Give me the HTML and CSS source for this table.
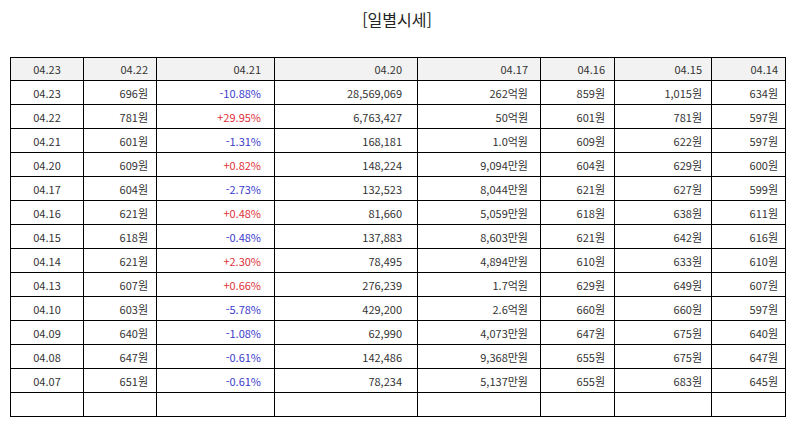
FILE: index.html
```html
<!DOCTYPE html>
<html lang="ko">
<head>
<meta charset="utf-8">
<link rel="stylesheet" href="styles.css">
</head>
<body>
<h1 class="title">[일별시세]</h1>
<table class="quotes">
<colgroup>
<col class="c1"><col class="c2"><col class="c3"><col class="c4"><col class="c5"><col class="c6"><col class="c7"><col class="c8">
</colgroup>
<thead>
<tr><th>04.23</th><th>04.22</th><th>04.21</th><th>04.20</th><th>04.17</th><th>04.16</th><th>04.15</th><th>04.14</th></tr>
</thead>
<tbody>
<tr><td>04.23</td><td>696원</td><td class="dn">-10.88%</td><td>28,569,069</td><td>262억원</td><td>859원</td><td>1,015원</td><td>634원</td></tr>
<tr><td>04.22</td><td>781원</td><td class="up">+29.95%</td><td>6,763,427</td><td>50억원</td><td>601원</td><td>781원</td><td>597원</td></tr>
<tr><td>04.21</td><td>601원</td><td class="dn">-1.31%</td><td>168,181</td><td>1.0억원</td><td>609원</td><td>622원</td><td>597원</td></tr>
<tr><td>04.20</td><td>609원</td><td class="up">+0.82%</td><td>148,224</td><td>9,094만원</td><td>604원</td><td>629원</td><td>600원</td></tr>
<tr><td>04.17</td><td>604원</td><td class="dn">-2.73%</td><td>132,523</td><td>8,044만원</td><td>621원</td><td>627원</td><td>599원</td></tr>
<tr><td>04.16</td><td>621원</td><td class="up">+0.48%</td><td>81,660</td><td>5,059만원</td><td>618원</td><td>638원</td><td>611원</td></tr>
<tr><td>04.15</td><td>618원</td><td class="dn">-0.48%</td><td>137,883</td><td>8,603만원</td><td>621원</td><td>642원</td><td>616원</td></tr>
<tr><td>04.14</td><td>621원</td><td class="up">+2.30%</td><td>78,495</td><td>4,894만원</td><td>610원</td><td>633원</td><td>610원</td></tr>
<tr><td>04.13</td><td>607원</td><td class="up">+0.66%</td><td>276,239</td><td>1.7억원</td><td>629원</td><td>649원</td><td>607원</td></tr>
<tr><td>04.10</td><td>603원</td><td class="dn">-5.78%</td><td>429,200</td><td>2.6억원</td><td>660원</td><td>660원</td><td>597원</td></tr>
<tr><td>04.09</td><td>640원</td><td class="dn">-1.08%</td><td>62,990</td><td>4,073만원</td><td>647원</td><td>675원</td><td>640원</td></tr>
<tr><td>04.08</td><td>647원</td><td class="dn">-0.61%</td><td>142,486</td><td>9,368만원</td><td>655원</td><td>675원</td><td>647원</td></tr>
<tr><td>04.07</td><td>651원</td><td class="dn">-0.61%</td><td>78,234</td><td>5,137만원</td><td>655원</td><td>683원</td><td>645원</td></tr>
<tr class="empty"><td></td><td></td><td></td><td></td><td></td><td></td><td></td><td></td></tr>
</tbody>
</table>
</body>
</html>
```
FILE: styles.css
```css
html, body {
  margin: 0;
  padding: 0;
  background: #ffffff;
}
body {
  font-family: "Noto Sans CJK KR", "Noto Sans", sans-serif;
  color: #333333;
  width: 794px;
}
.title {
  margin: 0;
  padding-top: 8px;
  height: 57px;
  box-sizing: border-box;
  text-align: center;
  font-size: 16px;
  font-weight: normal;
  line-height: 22px;
  color: #222222;
}
.quotes {
  margin-left: 10px;
  width: 776px;
  border-collapse: collapse;
  table-layout: fixed;
  font-size: 11px;
}
.c1 { width: 73px; }
.c2 { width: 73px; }
.c3 { width: 118px; }
.c4 { width: 143px; }
.c5 { width: 123px; }
.c6 { width: 74px; }
.c7 { width: 97px; }
.c8 { width: 74px; }
.quotes th,
.quotes td {
  border: 1px solid #000000;
  height: 23px;
  padding: 0;
  text-align: right;
  font-weight: normal;
  line-height: 14px;
  white-space: nowrap;
}
.quotes th {
  background: #f2f2f2;
  height: 22px;
}
.quotes th:nth-child(1), .quotes td:nth-child(1) { text-align: center; }
.quotes th:nth-child(2), .quotes td:nth-child(2) { padding-right: 8px; }
.quotes th:nth-child(3), .quotes td:nth-child(3) { padding-right: 13px; }
.quotes th:nth-child(4), .quotes td:nth-child(4) { padding-right: 15px; }
.quotes th:nth-child(5), .quotes td:nth-child(5) { padding-right: 12px; }
.quotes th:nth-child(6), .quotes td:nth-child(6) { padding-right: 9px; }
.quotes th:nth-child(7), .quotes td:nth-child(7) { padding-right: 9px; }
.quotes th:nth-child(8), .quotes td:nth-child(8) { padding-right: 7px; }
.quotes td.up { color: #e0303a; }
.quotes td.dn { color: #3b3bcc; }
```
